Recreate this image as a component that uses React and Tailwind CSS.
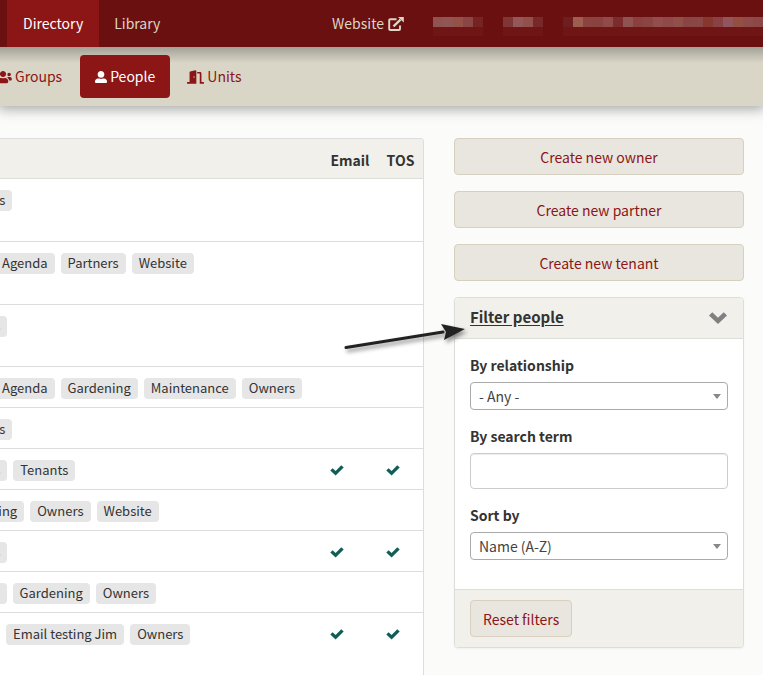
import { FaUsers, FaUserAlt, FaDoorOpen } from "react-icons/fa";

const rows = [
  { size: "tall", tags: ["Owners"], pull: "-ml-12" },
  { size: "tall", tags: ["Agenda", "Partners", "Website"], pull: "-ml-[5px]" },
  { size: "mid", tags: ["Owners"], pull: "-ml-[53px]" },
  { size: "base", tags: ["Agenda", "Gardening", "Maintenance", "Owners"], pull: "-ml-[5px]" },
  { size: "base", tags: ["Owners"], pull: "-ml-12" },
  { size: "base", tags: ["Owners", "Tenants"], pull: "-ml-[53px]", ok: true },
  { size: "base", tags: ["Gardening", "Owners", "Website"], pull: "-ml-[53px]" },
  { size: "base", tags: ["Owners"], pull: "-ml-[53px]", ok: true },
  { size: "base", tags: ["Agenda", "Gardening", "Owners"], pull: "-ml-[53px]" },
  { size: "last", tags: ["Email testing Jim", "Owners"], pull: "ml-[6px]", ok: true },
];

const rowHeights = { tall: "h-[63px]", mid: "h-[62px]", base: "h-[41px]", last: "h-[72px]" };

const redacted = [
  { gap: "ml-0", cells: ["bg-[#8f5352]", "bg-[#915653]", "bg-[#935148]", "bg-[#8a4645]", "bg-[#752323]"] },
  { gap: "ml-5", cells: ["bg-[#803536]", "bg-[#945758]", "bg-[#91504b]", "bg-[#782829]"] },
  {
    gap: "ml-5",
    cells: [
      "bg-[#6e1d20]", "bg-[#9d5e50]", "bg-[#8b4340]", "bg-[#8a413f]", "bg-[#8f4a49]", "bg-[#7b2c2c]", "bg-[#915252]",
      "bg-[#8a403e]", "bg-[#8a4543]", "bg-[#914e4c]", "bg-[#8e4948]", "bg-[#914f4a]", "bg-[#8b4444]", "bg-[#8a4644]",
      "bg-[#86372f]", "bg-[#894143]", "bg-[#92555c]", "bg-[#944f42]", "bg-[#8f4b4a]", "bg-[#8c4846]",
    ],
  },
];

function Check() {
  return (
    <svg viewBox="0 0 14 11" className="mx-auto h-[11px] w-[14px]" role="img" aria-label="Yes">
      <path d="M.3 5.6 2.6 3.3 5.6 6.1 11.3.3 13.7 2.6 5.6 10.6Z" fill="#125e57" />
    </svg>
  );
}

function ExternalIcon() {
  return (
    <svg viewBox="0 0 16 14" className="h-[14px] w-4" fill="none" stroke="currentColor" aria-hidden="true">
      <path d="M8.500 2.200H2.200a1 1 0 0 0-1 1v8.800a1 1 0 0 0 1 1h8.800a1 1 0 0 0 1-1V8.500" strokeWidth="1.900" />
      <path d="M5.500 9.300 12.500 2.600" strokeWidth="2.300" />
      <path d="M10 0h5.800v5.600Z" fill="currentColor" stroke="none" />
    </svg>
  );
}

function SelectBox({ id, label, options }) {
  return (
    <div>
      <label htmlFor={id} className="block h-6 font-bold leading-6">{label}</label>
      <div className="relative mt-[5px]">
        <select id={id} className="block h-7 w-full appearance-none rounded border border-[#aaa] bg-white pl-2 pr-6 pt-px text-[#444]">
          {options.map((o) => <option key={o}>{o}</option>)}
        </select>
        <span className="pointer-events-none absolute right-[7px] top-3 border-x-4 border-t-[5px] border-x-transparent border-t-[#888]" />
      </div>
    </div>
  );
}

export default function App() {
  return (
    <div className="min-h-screen overflow-hidden bg-[#fbfbf9] font-['Noto_Sans_CJK_SC',sans-serif] text-[14px] text-[#333]">
      <header className="relative z-20 flex h-[47px] items-stretch overflow-hidden whitespace-nowrap bg-[#6b1010] text-[#ddd5c5]">
        <a href="#directory" className="ml-[7px] flex items-center bg-[#8c1515] px-4 text-white">Directory</a>
        <a href="#library" className="flex items-center px-[15px]">Library</a>
        <a href="#website" className="ml-auto flex items-center gap-1">Website <ExternalIcon /></a>
        <div className="ml-[29px] flex w-[330px] items-center pt-[6px]" aria-hidden="true">
          <div className="mt-px h-[3px] w-px bg-[#c9b3b8]" />
          {redacted.map((group, g) => (
            <div key={g} className={"flex shrink-0 " + group.gap}>
              {group.cells.map((c, i) => (
                <div key={i} className={"h-[19px] w-[10px] border-b-[9px] border-[#701515] " + c} />
              ))}
            </div>
          ))}
        </div>
      </header>
      <nav className="relative z-10 h-[59px] bg-[#d9d6c8] pt-2 shadow-[0_1px_12px_2px_rgba(0,0,0,0.35)]">
        <div className="pointer-events-none absolute inset-x-0 top-0 h-4 bg-linear-to-b from-black/25 to-transparent" />
        <div className="relative flex h-[43px] items-stretch text-[#8c1515]">
          <a href="#groups" className="-ml-[6px] flex items-center gap-[3px]"><FaUsers className="h-[14px] w-[18px]" />Groups</a>
          <a href="#people" className="ml-[18px] flex items-center gap-[3px] rounded bg-[#8c1515] px-[15px] text-white"><FaUserAlt className="size-3" />People</a>
          <a href="#units" className="ml-[17px] flex items-center gap-[3px]"><FaDoorOpen className="h-[14px] w-[17px]" />Units</a>
        </div>
      </nav>
      <main className="flex items-start pt-8">
        <section className="min-w-0 flex-1 overflow-hidden rounded-tr border-r border-t border-[#ddd] bg-white">
          <table className="w-full table-fixed border-collapse">
            <thead>
              <tr className="h-[39px] border-b border-[#ddd] bg-[#f1f0eb]">
                <th aria-label="Groups" />
                <th className="w-[60px] pt-1 text-center font-bold">Email</th>
                <th className="w-[43px] pr-[2px] pt-1 text-center font-bold">TOS</th>
              </tr>
            </thead>
            <tbody>
              {rows.map((r, i) => (
                <tr key={i} className={"border-b border-[#ddd] last:border-0 " + rowHeights[r.size]}>
                  <td className="pt-[11px] align-top">
                    <div className={"flex gap-[6px] " + r.pull}>
                      {r.tags.map((t) => (
                        <span key={t} className="h-[21px] whitespace-nowrap rounded bg-[#e6e6e6] px-[7px] text-[13px] leading-5">{t}</span>
                      ))}
                    </div>
                  </td>
                  <td className="pr-[26px] pt-4 align-top">{r.ok && <Check />}</td>
                  <td className="pr-[18px] pt-4 align-top">{r.ok && <Check />}</td>
                </tr>
              ))}
            </tbody>
          </table>
        </section>
        <aside className="ml-[30px] mr-[19px] w-[290px] shrink-0">
          <div className="flex flex-col gap-4">
            {["owner", "partner", "tenant"].map((kind) => (
              <button key={kind} className="h-[37px] rounded border border-[#d5d0c0] bg-[#e9e6df] pt-px text-[#8c1515]">Create new {kind}</button>
            ))}
          </div>
          <form className="mt-4 rounded border border-[#ddd] bg-white shadow-xs">
            <div className="relative flex h-[41px] items-center justify-between rounded-t border-b border-[#ddd] bg-[#f1f0eb] pl-[15px] pr-4">
              <a href="#filter" className="pb-px text-[15px] font-bold underline underline-offset-2">Filter people</a>
              <svg viewBox="0 0 18 12" className="h-3 w-[18px]" aria-hidden="true"><path d="M0 3.5 3.3.3 9 5.8 14.7.3 18 3.5 9 12Z" fill="#808080" /></svg>
              <svg viewBox="0 0 126 36" className="pointer-events-none absolute -left-[113px] top-6 h-9 w-[126px] overflow-visible drop-shadow-[2px_3px_2px_rgba(0,0,0,0.45)]" aria-hidden="true">
                <path d="M4 25.500 101 10" stroke="#222" strokeWidth="3" strokeLinecap="round" />
                <path d="M99 2 123 7 102 18 104 10Z" fill="#222" />
              </svg>
            </div>
            <div className="flex h-[250px] flex-col gap-[14px] px-[15px] pt-[14px]">
              <SelectBox id="relationship" label="By relationship" options={["- Any -", "Owner", "Partner", "Tenant"]} />
              <div>
                <label htmlFor="search" className="block h-6 font-bold leading-6">By search term</label>
                <input id="search" type="text" className="mt-[5px] block h-9 w-full rounded border border-[#ccc] bg-white px-2 shadow-[inset_0_1px_1px_rgba(0,0,0,0.075)]" />
              </div>
              <SelectBox id="sort" label="Sort by" options={["Name (A-Z)", "Name (Z-A)"]} />
            </div>
            <div className="rounded-b border-t border-[#ddd] bg-[#f1f0eb] px-[15px] py-[10px]">
              <button type="reset" className="block h-[37px] rounded border border-[#d9cfc0] bg-[#e9e6df] px-3 pt-px text-[#8c1515]">Reset filters</button>
            </div>
          </form>
        </aside>
      </main>
    </div>
  );
}
